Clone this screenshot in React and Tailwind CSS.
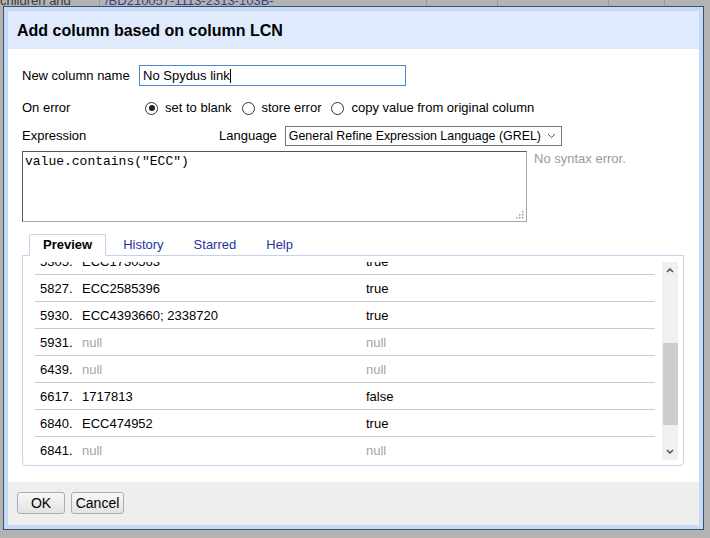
import React from 'react';

const ROWS = [
  { n: '5305.', v: 'ECC1730563', r: 'true' },
  { n: '5827.', v: 'ECC2585396', r: 'true' },
  { n: '5930.', v: 'ECC4393660; 2338720', r: 'true' },
  { n: '5931.', v: null, r: null },
  { n: '6439.', v: null, r: null },
  { n: '6617.', v: '1717813', r: 'false' },
  { n: '6840.', v: 'ECC474952', r: 'true' },
  { n: '6841.', v: null, r: null },
];

const Radio = ({ checked }) => (
  <span className="w-[13px] h-[13px] rounded-full border border-[#333] bg-white flex items-center justify-center shrink-0">
    {checked && <span className="w-[6px] h-[6px] rounded-full bg-[#222]"></span>}
  </span>
);

const Cell = ({ children, className = '' }) => (
  <span className={className}>{children}</span>
);

export default function App() {
  return (
    <div className="relative w-[710px] h-[538px] overflow-hidden bg-[#b3b3b3] font-['Liberation_Sans',Arial,sans-serif] text-[13px] text-black">
      {/* sheet behind the dialog */}
      <div className="flex h-[16px] -mt-[9px] text-[#3a3a3a] whitespace-nowrap">
        <div className="w-[100px] border-r border-[#979797] overflow-hidden">children and</div>
        <div className="w-[327px] border-r border-[#979797] pl-[5px] text-[#34448a] overflow-hidden">/BD210057-1113-2313-103B-</div>
        <div className="w-[71px] border-r border-[#979797]"></div>
        <div className="w-[111px] border-r border-[#979797]"></div>
        <div className="w-[56px] border-r border-[#979797]"></div>
      </div>

      {/* dialog */}
      <div className="absolute left-[3px] top-[6px] w-[701px] h-[524px] border border-[#3f506e] bg-[#c6daf8] p-[4px] flex flex-col">
        <div className="h-[38px] bg-[#dfeafd] pl-[9px] pt-px flex items-center font-bold text-[16px]">
          Add column based on column LCN
        </div>

        <div className="flex-1 bg-white pl-[14px] pt-[16px]">
          <div className="flex items-center h-[21px]">
            <span className="w-[117px]">New column name</span>
            <div className="w-[267px] h-[21px] border border-[#4a8acb] px-[3px] flex items-center">
              <span>No Spydus link</span>
              <span className="w-px h-[14px] bg-black"></span>
            </div>
          </div>

          <div className="flex items-center h-[16px] mt-[14px]">
            <span className="w-[123px]">On error</span>
            <Radio checked />
            <span className="ml-[7px]">set to blank</span>
            <span className="ml-[10px]"><Radio /></span>
            <span className="ml-[7px]">store error</span>
            <span className="ml-[10px]"><Radio /></span>
            <span className="ml-[7px]">copy value from original column</span>
          </div>

          <div className="flex items-center h-[20px] mt-[10px]">
            <span className="w-[197px]">Expression</span>
            <span>Language</span>
            <div className="ml-[8px] w-[277px] h-[20px] border border-[#767676] flex items-center justify-between pl-[3px] pr-[5px] whitespace-nowrap overflow-hidden">
              <span className="text-[12.4px]">General Refine Expression Language (GREL)</span>
              <svg className="shrink-0" width="9" height="6" viewBox="0 0 9 6">
                <path d="M1 1l3.5 3.5L8 1" fill="none" stroke="#555" strokeWidth="1" />
              </svg>
            </div>
          </div>

          <div className="flex items-start mt-[5px]">
            <div className="relative w-[505px] h-[71px] border border-[#a5a5a5] border-t-[#555] border-l-[#555] px-[2px] font-['Liberation_Mono','Courier_New',monospace] text-[13px]">
              value.contains("ECC")
              <svg className="absolute right-[2px] bottom-[2px]" width="8" height="8" viewBox="0 0 8 8">
                <rect x="6" y="0" width="1.5" height="1.5" fill="#999" />
                <rect x="3" y="3" width="1.5" height="1.5" fill="#999" />
                <rect x="6" y="3" width="1.5" height="1.5" fill="#999" />
                <rect x="0" y="6" width="1.5" height="1.5" fill="#999" />
                <rect x="3" y="6" width="1.5" height="1.5" fill="#999" />
                <rect x="6" y="6" width="1.5" height="1.5" fill="#999" />
              </svg>
            </div>
            <span className="ml-[7px] text-[#9a9a9a] -mt-[2px]">No syntax error.</span>
          </div>

          {/* tabs */}
          <div className="mt-[12px] w-[662px]">
            <div className="flex items-end h-[21px] pl-[7px]">
              <div className="relative z-10 -mb-px h-[22px] px-[13px] border border-[#c3d2ea] border-b-white bg-white font-bold flex items-center rounded-t-[2px]">
                Preview
              </div>
              <div className="h-[21px] pl-[17px] pr-[15px] flex items-center text-[#1f35a0]">History</div>
              <div className="h-[21px] px-[15px] flex items-center text-[#1f35a0]">Starred</div>
              <div className="h-[21px] px-[15px] flex items-center text-[#1f35a0]">Help</div>
            </div>
            <div className="h-[211px] border border-[#c3d2ea] rounded-b-[4px] pt-[6px] pl-[12px] pr-[5px] flex">
              <div className="w-[620px] h-[198px] overflow-hidden">
                <div className="-mt-[14px]">
                  {ROWS.map((row) => (
                    <div key={row.n} className="h-[27px] pt-[2px] border-b border-[#c9c9c9] flex items-center">
                      <Cell className="w-[47px] pl-[5px]">{row.n}</Cell>
                      <Cell className={`w-[284px] ${row.v ? '' : 'text-[#a5a5a5]'}`}>{row.v || 'null'}</Cell>
                      <Cell className={row.r ? '' : 'text-[#a5a5a5]'}>{row.r || 'null'}</Cell>
                    </div>
                  ))}
                </div>
              </div>
              <div className="ml-[7px] w-[16px] h-[198px] bg-[#f0f0f0] flex flex-col items-center">
                <div className="h-[17px] flex items-center justify-center">
                  <svg width="8" height="5" viewBox="0 0 8 5">
                    <path d="M1 4l3-3 3 3" fill="none" stroke="#505050" strokeWidth="1.5" />
                  </svg>
                </div>
                <div className="mt-[64px] w-[15px] h-[82px] bg-[#cdcdcd]"></div>
                <div className="mt-auto h-[17px] flex items-center justify-center">
                  <svg width="8" height="5" viewBox="0 0 8 5">
                    <path d="M1 1l3 3 3-3" fill="none" stroke="#505050" strokeWidth="1.5" />
                  </svg>
                </div>
              </div>
            </div>
          </div>
        </div>

        <div className="h-[43px] bg-[#eeeeee] pl-[9px] pt-[10px] flex items-start gap-[6px]">
          <button className="w-[48px] h-[22px] border border-[#acacac] rounded-[3px] bg-gradient-to-b from-[#f7f7f7] to-[#e3e3e3] text-[14px]">OK</button>
          <button className="w-[53px] h-[22px] border border-[#acacac] rounded-[3px] bg-gradient-to-b from-[#f7f7f7] to-[#e3e3e3] text-[14px]">Cancel</button>
        </div>
      </div>
    </div>
  );
}
